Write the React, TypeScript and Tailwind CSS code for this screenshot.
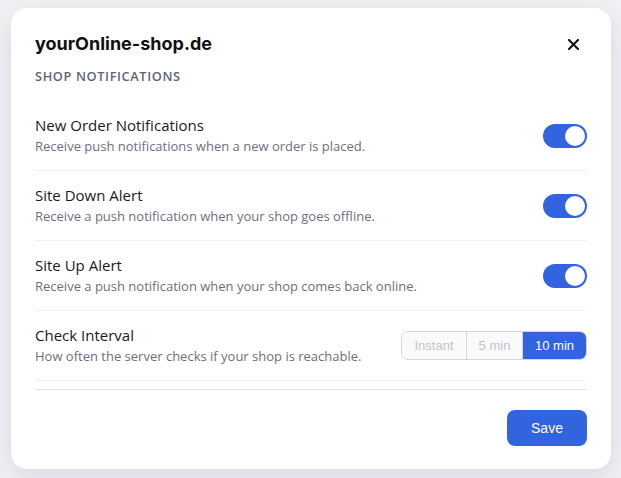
import { useState } from "react";

type Setting = {
  id: string;
  title: string;
  description: string;
};

const SETTINGS: Setting[] = [
  {
    id: "orders",
    title: "New Order Notifications",
    description: "Receive push notifications when a new order is placed.",
  },
  {
    id: "down",
    title: "Site Down Alert",
    description: "Receive a push notification when your shop goes offline.",
  },
  {
    id: "up",
    title: "Site Up Alert",
    description: "Receive a push notification when your shop comes back online.",
  },
];

const INTERVALS = [
  { id: "instant", label: "Instant", width: "w-[64px]" },
  { id: "5", label: "5 min", width: "w-[56px]" },
  { id: "10", label: "10 min", width: "w-[64px]" },
];

function Toggle({ on, onChange }: { on: boolean; onChange: () => void }) {
  return (
    <button
      type="button"
      role="switch"
      aria-checked={on}
      onClick={onChange}
      className={`flex h-6 w-11 shrink-0 items-center rounded-full p-[2px] ${
        on ? "justify-end bg-[#3264e0]" : "justify-start bg-[#d4d4d8]"
      }`}
    >
      <span className="h-5 w-5 rounded-full bg-white" />
    </button>
  );
}

export default function App() {
  const [enabled, setEnabled] = useState<Record<string, boolean>>({
    orders: true,
    down: true,
    up: true,
  });
  const [interval, setInterval] = useState("10");

  return (
    <div className="flex h-[478px] w-[621px] items-start bg-[#f2f2f5] pl-[11px] pt-[8px] font-['Open_Sans',sans-serif]">
      <div className="w-[600px] rounded-[16px] bg-white px-6 pb-[23px] pt-[22px] shadow-[0_8px_28px_rgba(70,70,120,0.16)]">
        <div className="flex items-center justify-between">
          <h1 className="font-['Inter',sans-serif] text-[18px] font-bold leading-7 text-[#111]">
            yourOnline-shop.de
          </h1>
          <button type="button" aria-label="Close" className="mr-[4px] flex h-5 w-5 items-center justify-center">
            <svg width="11" height="11" viewBox="0 0 11 11" fill="none">
              <path d="M1 1L10 10M10 1L1 10" stroke="#111" strokeWidth="2.1" strokeLinecap="round" />
            </svg>
          </button>
        </div>

        <p className="mt-[10px] text-[12.75px] font-semibold uppercase leading-4 tracking-[0.05em] text-[#5d6475]">
          Shop Notifications
        </p>

        <div className="mt-[17px]">
          {SETTINGS.map((s) => (
            <div key={s.id} className="flex items-center justify-between border-b border-[#f0f0f2] py-[14px]">
              <div>
                <p className="text-[15px] leading-[21px] text-[#1a1a1a]">{s.title}</p>
                <p className="text-[13px] leading-5 text-[#6b7080]">{s.description}</p>
              </div>
              <Toggle
                on={enabled[s.id]}
                onChange={() => setEnabled((prev) => ({ ...prev, [s.id]: !prev[s.id] }))}
              />
            </div>
          ))}

          <div className="flex items-center justify-between border-b border-[#f0f0f2] py-[14px]">
            <div>
              <p className="text-[15px] leading-[21px] text-[#1a1a1a]">Check Interval</p>
              <p className="text-[13px] leading-5 text-[#6b7080]">
                How often the server checks if your shop is reachable.
              </p>
            </div>
            <div className="flex h-[29px] overflow-hidden rounded-[7px] border border-[#d6d6da] font-['Liberation_Sans',Arial,sans-serif] text-[13px]">
              {INTERVALS.map((opt, i) => {
                const active = interval === opt.id;
                return (
                  <button
                    key={opt.id}
                    type="button"
                    onClick={() => setInterval(opt.id)}
                    className={`${opt.width} ${i > 0 ? "border-l border-[#d6d6da]" : ""} ${
                      active ? "border-[#3264e0] bg-[#3264e0] text-white" : "bg-[#fafafa] text-[#c4c4c8]"
                    }`}
                  >
                    {opt.label}
                  </button>
                );
              })}
            </div>
          </div>
        </div>

        <div className="mt-2 flex justify-end border-t border-[#e2e2e6] pt-5">
          <button
            type="button"
            className="h-9 w-20 rounded-[8px] bg-[#3264e0] font-['Liberation_Sans',Arial,sans-serif] text-[14px] text-white"
          >
            Save
          </button>
        </div>
      </div>
    </div>
  );
}
